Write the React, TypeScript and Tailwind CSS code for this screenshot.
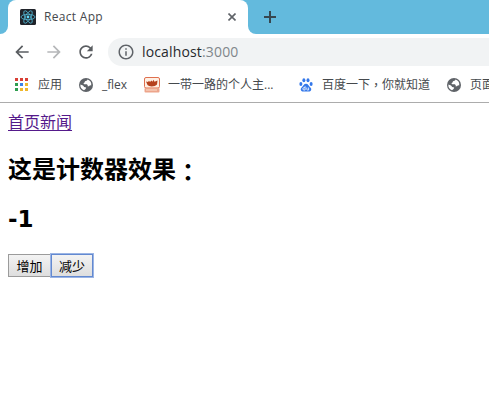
import React, { useState } from 'react';
import { MdArrowBack, MdArrowForward, MdRefresh, MdInfoOutline } from 'react-icons/md';

const latin = "font-['Open_Sans','Noto_Sans_CJK_SC',sans-serif]";
const cjk = "font-['Noto_Sans_CJK_SC',sans-serif]";
const centred = "font-['Noto_Sans_CJK_TC',sans-serif]";

function ReactMark() {
  return (
    <svg viewBox="0 0 16 16" className="size-4 shrink-0">
      <rect width="16" height="16" rx="1.5" fill="#20232a" />
      <g fill="none" stroke="#53b9d6" strokeWidth="0.8">
        <ellipse cx="8" cy="8" rx="7" ry="2.7" />
        <ellipse cx="8" cy="8" rx="7" ry="2.7" transform="rotate(60 8 8)" />
        <ellipse cx="8" cy="8" rx="7" ry="2.7" transform="rotate(120 8 8)" />
      </g>
      <circle cx="8" cy="8" r="1.4" fill="#61dafb" />
    </svg>
  );
}

function AppsGrid() {
  const dots = ['#d93f35', '#d93f35', '#d93f35', '#2f9e50', '#3b82e8', '#efb72c', '#2f9e50', '#efb72c', '#efb72c'];
  return (
    <svg viewBox="0 0 13 13" className="size-[13px] shrink-0">
      {dots.map((c, i) => (
        <rect key={i} x={(i % 3) * 5} y={Math.floor(i / 3) * 5} width="3" height="3" fill={c} />
      ))}
    </svg>
  );
}

function Globe() {
  return (
    <svg viewBox="0 0 16 16" className="ml-4 size-4 shrink-0">
      <circle cx="8" cy="8" r="7" fill="#5f6368" />
      <path d="M9.5 2.5 L9 3.6 L7 4.2 L6.5 5.6 L5.4 6.2 L6.2 7.2 H8.8 L9.8 8.2 L9.5 9.3 L11 9.2 L12 8.2 L13.2 8.6 A5.5 5.5 0 0 0 9.5 2.5Z" fill="white" />
      <path d="M2.4 7.4 L5 8.5 L6.2 10 L8.2 10.4 L7.6 12 L6 13.2 A5.6 5.6 0 0 1 2.4 7.4Z" fill="white" />
    </svg>
  );
}

function PotMark() {
  return (
    <svg viewBox="0 0 16 16" className="ml-4 size-4 shrink-0">
      <rect x="0.5" y="0.5" width="15" height="10.5" rx="1.5" fill="#fff0e4" stroke="#df704f" />
      <path d="M2 4.5 L4 5 L5 3.8 L6 5 L7.5 3.5 L8.5 4.8 L9.5 2.8 L10.5 4.8 L13.5 3.5 L13 7.5 C11 10 5 10 3.5 8 Z" fill="#b6421e" />
      <rect x="0.5" y="11" width="15" height="4.5" rx="1" fill="#eda58b" />
      <path d="M2 13 H13" stroke="#fbe0cf" strokeWidth="1" />
    </svg>
  );
}

function PawMark() {
  return (
    <svg viewBox="0 0 14 14" className="ml-[24px] size-3.5 shrink-0" fill="#3478ea">
      <ellipse cx="1.9" cy="5.9" rx="1.5" ry="2" />
      <ellipse cx="4.9" cy="2.3" rx="1.5" ry="2" />
      <ellipse cx="9" cy="2.3" rx="1.5" ry="2" />
      <ellipse cx="12.1" cy="5.9" rx="1.5" ry="2" />
      <path d="M7 5.8 C9.2 5.8 9.5 8 11.4 9.4 C13.3 11 11.8 13.8 9.6 13.6 H4.4 C2.2 13.8 .7 11 2.6 9.4 C4.5 8 4.8 5.8 7 5.8Z" />
      <path d="M6.1 8.2 V12 H5 A1.1 1.1 0 0 1 5 9.7 H6 M7.8 9.5 V11.4 Q7.8 12 8.4 12 H9.6 V9.5" fill="none" stroke="white" strokeWidth="0.8" />
    </svg>
  );
}

export default function App() {
  const [count, setCount] = useState(-1);
  const button = `h-[23px] pb-px text-[13px] leading-none bg-gradient-to-b from-[#f3f3f3] to-[#dedede] border text-black ${cjk}`;
  return (
    <div className="h-[417px] w-[489px] overflow-hidden bg-white">
      <header>
        <div className="flex h-[34px] bg-[#63badd]">
          <div className="w-2 shrink-0 bg-white">
            <div className="h-full rounded-br-lg bg-[#63badd]" />
          </div>
          <div className="flex w-60 shrink-0 items-center rounded-t-lg bg-white pl-3 pr-[12px]">
            <ReactMark />
            <span className={`ml-2 flex-1 text-[12px] tracking-[0.3px] text-[#45494d] ${latin}`}>React App</span>
            <svg viewBox="0 0 8 8" className="size-2"><path d="M.5 .5 L7.5 7.5 M7.5 .5 L.5 7.5" stroke="#5f6368" strokeWidth="1.6" /></svg>
          </div>
          <div className="flex-1 bg-white">
            <div className="flex h-full items-center rounded-bl-lg bg-[#63badd] pl-4">
              <svg viewBox="0 0 12 12" className="size-3"><path d="M6 0 V12 M0 6 H12" stroke="#37474f" strokeWidth="2" /></svg>
            </div>
          </div>
        </div>
        <div className="flex h-9 items-center pl-3">
          <MdArrowBack className="size-5 shrink-0 text-[#5a5d61]" />
          <MdArrowForward className="ml-3 size-5 shrink-0 text-[#b5b7b9]" />
          <MdRefresh className="ml-3 size-5 shrink-0 text-[#5a5d61]" />
          <div className="ml-3 flex h-7 flex-1 items-center rounded-l-full bg-[#f1f3f4] pl-[9px]">
            <MdInfoOutline className="size-[18px] text-[#5f6368]" />
            <span className={`ml-[7px] text-[14px] leading-5 tracking-[0.15px] text-[#26292d] ${latin}`}>
              localhost<span className="text-[#80868b]">:3000</span>
            </span>
          </div>
        </div>
        <nav className={`flex h-[33px] items-center overflow-hidden whitespace-nowrap border-b border-[#acacac] pl-[15px] pb-[3px] text-[12px] leading-4 text-[#45494d] ${latin}`}>
          <AppsGrid />
          <span className="ml-2.5 w-6 shrink-0">应用</span>
          <Globe />
          <span className="ml-2 w-[26px] shrink-0 tracking-[-0.1px]">_flex</span>
          <PotMark />
          <span className="ml-2 w-[107px] shrink-0">一带一路的个人主...</span>
          <PawMark />
          <span className="ml-[9px] w-[108px] shrink-0">百度一下<span className={`relative top-px ${centred}`}>，</span>你就知道</span>
          <Globe />
          <span className="ml-2 shrink-0">页面</span>
        </nav>
      </header>
      <main className={`px-2 pt-1.5 text-black ${cjk}`}>
        <div className="flex h-6 items-center text-[16px] leading-6 text-[#551a8b]">
          <a href="#home" className="underline underline-offset-2">首页</a>
          <a href="#news" className="underline underline-offset-2">新闻</a>
        </div>
        <h2 className="mt-[19px] text-[24px] font-bold leading-8">这是计数器效果<span className={`relative top-[3px] ${centred}`}>：</span></h2>
        <h2 className="mt-[19px] text-[23px] font-bold leading-8 font-['DejaVu_Sans',sans-serif]">{count}</h2>
        <div className="mt-[19px] flex">
          <button className={`${button} w-[43px] border-[#9b9b9b]`} onClick={() => setCount(count + 1)}>增加</button>
          <button className={`${button} w-[42px] border-[#6389d0] outline outline-1 outline-[#9bb5e5]`} onClick={() => setCount(count - 1)}>减少</button>
        </div>
      </main>
    </div>
  );
}
